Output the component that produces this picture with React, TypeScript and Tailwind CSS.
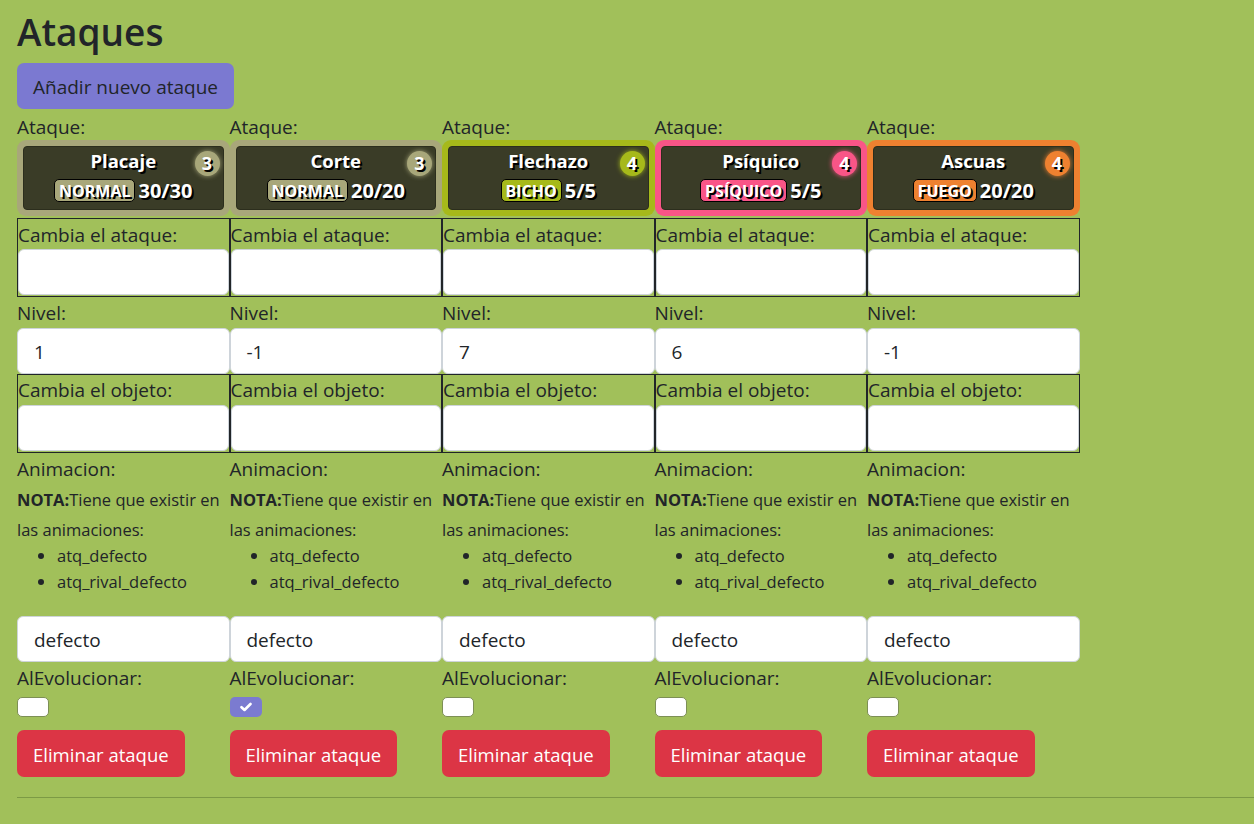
import React from "react";

type Move = {
  name: string;
  type: string;
  pp: string;
  cost: number;
  color: string;
  nivel: string;
  checked: boolean;
};

const moves: Move[] = [
  { name: "Placaje", type: "NORMAL", pp: "30/30", cost: 3, color: "#a8a77a", nivel: "1", checked: false },
  { name: "Corte", type: "NORMAL", pp: "20/20", cost: 3, color: "#a8a77a", nivel: "-1", checked: true },
  { name: "Flechazo", type: "BICHO", pp: "5/5", cost: 4, color: "#a6b91a", nivel: "7", checked: false },
  { name: "Psíquico", type: "PSÍQUICO", pp: "5/5", cost: 4, color: "#f95587", nivel: "6", checked: false },
  { name: "Ascuas", type: "FUEGO", pp: "20/20", cost: 4, color: "#ee8130", nivel: "-1", checked: false },
];

const shadow = { textShadow: "2px 2px 0 #000" };

function Card({ m }: { m: Move }) {
  return (
    <div className="rounded-[9px] p-[6px] h-[76px]" style={{ background: m.color }}>
      <div className="relative h-[64px] rounded-[4px] bg-[#3a3c27] border border-[#2c2e1d] flex flex-col items-center">
        <div className="text-[18.5px] font-bold text-white leading-[24px] mt-[2px]" style={shadow}>
          {m.name}
        </div>
        <span
          className="absolute right-[3px] top-[4px] w-[25px] h-[25px] rounded-full flex items-center justify-center text-[18px] font-bold text-white"
          style={{ background: m.color, boxShadow: `0 0 5px ${m.color}`, ...shadow }}
        >
          {m.cost}
        </span>
        <div className="flex items-center gap-[3px] mt-[6px]">
          <span
            className="rounded-[5px] border border-black px-[4px] h-[23px] flex items-center text-[16px] font-bold text-white leading-none"
            style={{ background: m.color, ...shadow }}
          >
            {m.type}
          </span>
          <span className="text-[20px] font-bold text-white leading-[23px]" style={shadow}>
            {m.pp}
          </span>
        </div>
      </div>
    </div>
  );
}

function Input({ value }: { value?: string }) {
  return (
    <div className="h-[46px] w-full rounded-[6px] bg-white border border-[#ced4da] flex items-center px-[16px] pt-[2px] text-[19px] text-[#212529]">
      {value}
    </div>
  );
}

function Column({ m }: { m: Move }) {
  return (
    <div className="w-[212.5px] flex flex-col shrink-0">
      <div className="h-[27px] leading-[29px]">Ataque:</div>
      <div className="h-[76px] mb-[2px]">
        <Card m={m} />
      </div>
      <div className="border border-[#212529] h-[79px]">
        <div className="h-[27px] leading-[32px] mb-[3px]">Cambia el ataque:</div>
        <Input />
      </div>
      <div className="h-[27px] leading-[31px] mt-[1px] mb-[3px]">Nivel:</div>
      <Input value={m.nivel} />
      <div className="border border-[#212529] h-[79px]">
        <div className="h-[27px] leading-[31px] mb-[3px]">Cambia el objeto:</div>
        <Input />
      </div>
      <div className="h-[27px] leading-[31px] mt-[1px]">Animacion:</div>
      <div className="text-[16.5px] mt-[4px]">
        <div className="h-[30px] leading-[30px] whitespace-nowrap">
          <b className="font-bold">NOTA:</b>Tiene que existir en
        </div>
        <div className="h-[30px] leading-[30px]">las animaciones:</div>
      </div>
      <ul className="list-disc pl-[40px] text-[16.5px] leading-[26px] mt-[-2px] mb-[21px]">
        <li>atq_defecto</li>
        <li>atq_rival_defecto</li>
      </ul>
      <Input value="defecto" />
      <div className="h-[27px] leading-[29px] mt-[2px]">AlEvolucionar:</div>
      <div className="mt-[6px] h-[20px]">
        {m.checked ? (
          <div className="w-[32px] h-[20px] rounded-[5px] bg-[#7b7bd0] flex items-center justify-center">
            <svg width="12" height="10" viewBox="0 0 12 10">
              <path d="M1.5 5.2 L4.5 8 L10.5 2" fill="none" stroke="#fff" strokeWidth="2.6" strokeLinecap="round" strokeLinejoin="round" />
            </svg>
          </div>
        ) : (
          <div className="w-[32px] h-[20px] rounded-[5px] bg-white border border-[#7d8f55]" />
        )}
      </div>
      <div className="mt-[13px]">
        <div className="inline-flex h-[47px] items-center px-[16px] pt-[2px] rounded-[7px] bg-[#dc3545] text-white text-[18.5px]">
          Eliminar ataque
        </div>
      </div>
    </div>
  );
}

export default function App() {
  return (
    <div className="min-h-[824px] bg-[#a1c05a] pl-[17px] pt-[8px] text-[#212529] text-[19px] font-['Open_Sans',sans-serif]">
      <h1 className="text-[37px] font-semibold leading-[48px]">Ataques</h1>
      <div className="mt-[7px] mb-[4px]">
        <div className="inline-flex h-[46px] items-center px-[16px] pt-[2px] rounded-[7px] bg-[#7b79d1] text-[19px] text-[#212529]">
          Añadir nuevo ataque
        </div>
      </div>
      <div className="flex">
        {moves.map((m, i) => (
          <Column key={i} m={m} />
        ))}
      </div>
      <hr className="mt-[20px] border-0 border-t border-[#7c9a45]" />
    </div>
  );
}
